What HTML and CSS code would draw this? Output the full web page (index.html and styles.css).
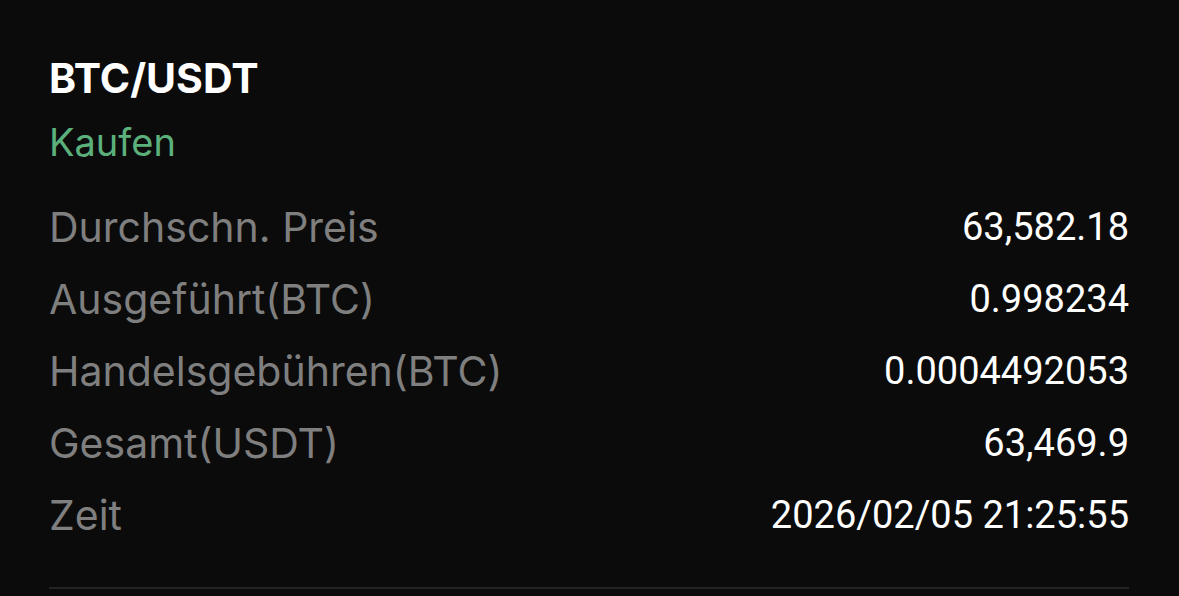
FILE: index.html
```html
<!DOCTYPE html>
<html lang="de">
<head>
    <meta charset="UTF-8">
    <meta name="viewport" content="width=device-width, initial-scale=1.0">
    <title>BTC/USDT Auftrag</title>
    <link rel="stylesheet" href="styles.css">
</head>
<body>

<div class="order">
    <h2 class="pair">BTC/USDT</h2>
    <div class="side">Kaufen</div>

    <div class="rows">
        <div class="row">
            <span class="label">Durchschn. Preis</span>
            <span class="value">63,582.18</span>
        </div>
        <div class="row">
            <span class="label">Ausgeführt(BTC)</span>
            <span class="value">0.998234</span>
        </div>
        <div class="row">
            <span class="label">Handelsgebühren(BTC)</span>
            <span class="value">0.0004492053</span>
        </div>
        <div class="row">
            <span class="label">Gesamt(USDT)</span>
            <span class="value">63,469.9</span>
        </div>
        <div class="row">
            <span class="label">Zeit</span>
            <span class="value">2026/02/05 21:25:55</span>
        </div>
    </div>

    <div class="divider"></div>
</div>

</body>
</html>
```

FILE: styles.css
```css
html, body {
    margin: 0;
    padding: 0;
    background-color: #0b0b0b;
}
body {
    font-family: Inter, "Noto Sans", sans-serif;
    overflow: hidden;
}
.order {
    padding: 54px 50px 0 49px;
}
.pair {
    margin: 0;
    font-size: 41px;
    line-height: 48px;
    font-weight: 700;
    color: #ffffff;
}
.side {
    margin-top: 20px;
    font-size: 38px;
    line-height: 40px;
    color: #5bb07c;
}
.rows {
    margin-top: 29px;
}
.row {
    display: flex;
    justify-content: space-between;
    align-items: center;
    height: 72px;
    line-height: 72px;
}
.label {
    font-size: 41px;
    color: #7f7f7f;
}
.value {
    font-family: Roboto, sans-serif;
    font-size: 38px;
    color: #ffffff;
}
.divider {
    margin-top: 36px;
    height: 2px;
    background-color: #232323;
}
```
